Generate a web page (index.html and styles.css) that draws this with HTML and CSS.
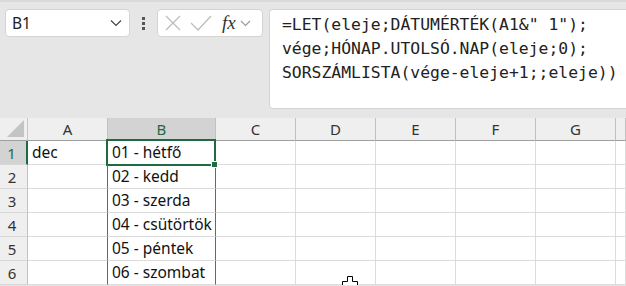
FILE: index.html
```html
<!DOCTYPE html>
<html>
<head>
  <title>Sorszámlista</title>
  <link rel="stylesheet" href="styles.css">
</head>
<body>
  <div class="topbar">
    <div class="namebox">
      <span>B1</span>
      <svg width="12" height="8" viewBox="0 0 12 8"><path d="M1 1.5 L6 6.5 L11 1.5" fill="none" stroke="#444" stroke-width="1.2"/></svg>
    </div>
    <div class="dots"><i></i><i></i><i></i></div>
    <div class="fxbox">
      <svg width="18" height="16" viewBox="0 0 18 16"><path d="M2 1 L16 15 M16 1 L2 15" stroke="#bdbdbd" stroke-width="1.3"/></svg>
      <svg width="22" height="16" viewBox="0 0 22 16"><path d="M1 8 L8 15 L21 1" fill="none" stroke="#bdbdbd" stroke-width="1.3"/></svg>
      <span class="fx">fx</span>
      <svg width="11" height="7" viewBox="0 0 11 7"><path d="M1 1 L5.5 5.5 L10 1" fill="none" stroke="#999" stroke-width="1.1"/></svg>
    </div>
    <div class="formula">=LET(eleje;DÁTUMÉRTÉK(A1&amp;" 1");
vége;HÓNAP.UTOLSÓ.NAP(eleje;0);
SORSZÁMLISTA(vége-eleje+1;;eleje))</div>
  </div>

  <div class="sheet">
    <div class="corner"><svg width="17" height="17" viewBox="0 0 17 17"><path d="M17 0 L17 17 L0 17 Z" fill="#c4c4c4"/></svg></div>
    <div class="colhead">A</div>
    <div class="colhead active">B</div>
    <div class="colhead">C</div>
    <div class="colhead">D</div>
    <div class="colhead">E</div>
    <div class="colhead">F</div>
    <div class="colhead">G</div>
    <div class="colhead"></div>

    <div class="rowhead active">1</div>
    <div class="cell">dec</div>
    <div class="cell selected">01 - hétfő</div>
    <div class="cell"></div><div class="cell"></div><div class="cell"></div><div class="cell"></div><div class="cell"></div><div class="cell"></div>

    <div class="rowhead">2</div>
    <div class="cell spill-edge"></div>
    <div class="cell spill">02 - kedd</div>
    <div class="cell"></div><div class="cell"></div><div class="cell"></div><div class="cell"></div><div class="cell"></div><div class="cell"></div>

    <div class="rowhead">3</div>
    <div class="cell spill-edge"></div>
    <div class="cell spill">03 - szerda</div>
    <div class="cell"></div><div class="cell"></div><div class="cell"></div><div class="cell"></div><div class="cell"></div><div class="cell"></div>

    <div class="rowhead">4</div>
    <div class="cell spill-edge"></div>
    <div class="cell spill">04 - csütörtök</div>
    <div class="cell"></div><div class="cell"></div><div class="cell"></div><div class="cell"></div><div class="cell"></div><div class="cell"></div>

    <div class="rowhead">5</div>
    <div class="cell spill-edge"></div>
    <div class="cell spill">05 - péntek</div>
    <div class="cell"></div><div class="cell"></div><div class="cell"></div><div class="cell"></div><div class="cell"></div><div class="cell"></div>

    <div class="rowhead">6</div>
    <div class="cell spill-edge"></div>
    <div class="cell spill">06 - szombat</div>
    <div class="cell"></div>
    <div class="cell">
      <svg class="cursor" width="18" height="12" viewBox="0 0 18 12"><path d="M6.5 0.5 H11.5 V5.5 H16.5 V12 H1.5 V5.5 H6.5 Z" fill="#fff" stroke="#000" stroke-width="1"/></svg>
    </div>
    <div class="cell"></div><div class="cell"></div><div class="cell"></div><div class="cell"></div>
  </div>
</body>
</html>
```

FILE: styles.css
```css
body {
  margin: 0;
  background-color: #e6e6e6;
  font-family: "Noto Sans", sans-serif;
  color: #222;
  overflow: hidden;
}

.topbar {
  display: flex;
  align-items: flex-start;
  height: 118px;
  box-sizing: border-box;
  padding: 9px 0 0 5px;
  border-top: 2px solid #dadada;
}

.namebox {
  width: 125px;
  height: 28px;
  box-sizing: border-box;
  margin-top: -2px;
  background-color: #fff;
  border: 1px solid #d4d4d4;
  border-radius: 4px;
  display: flex;
  align-items: center;
  justify-content: space-between;
  padding: 0 7px 0 6px;
  font-size: 15.5px;
}

.dots {
  width: 27px;
  height: 28px;
  margin-top: -2px;
  display: flex;
  flex-direction: column;
  align-items: center;
  justify-content: center;
  gap: 2px;
}

.dots i {
  width: 3px;
  height: 3px;
  background-color: #555;
}

.fxbox {
  width: 106px;
  height: 28px;
  box-sizing: border-box;
  margin-top: -2px;
  background-color: #fff;
  border: 1px solid #d4d4d4;
  border-radius: 4px;
  display: flex;
  align-items: center;
  padding-left: 6px;
  gap: 8px;
}

.fxbox .fx {
  font-family: "Liberation Serif", serif;
  font-style: italic;
  font-size: 19px;
  color: #333;
  margin-left: 2px;
  margin-right: -4px;
}

.formula {
  flex: 1;
  height: 100px;
  box-sizing: border-box;
  margin: -2px 0 0 6px;
  background-color: #fff;
  border: 1px solid #d4d4d4;
  border-right: none;
  border-radius: 4px 0 0 4px;
  padding: 3px 0 0 12px;
  font-family: "DejaVu Sans Mono", monospace;
  font-size: 16.4px;
  line-height: 24px;
  white-space: pre;
  color: #222;
}

.sheet {
  display: grid;
  grid-template-columns: 28px 80px 108px 80px 80px 80px 80px 80px 1fr;
  grid-template-rows: 23px repeat(6, 24px);
  background-color: #fff;
}

.corner,
.colhead,
.rowhead {
  background-color: #efefef;
  color: #333;
  font-size: 15px;
  display: flex;
  align-items: center;
  justify-content: center;
  box-sizing: border-box;
}

.corner {
  align-items: flex-end;
  justify-content: flex-end;
  padding: 0 3px 3px 0;
  border-right: 1px solid #c8c8c8;
  border-bottom: 1px solid #a0a0a0;
}

.colhead {
  border-right: 1px solid #c0c0c0;
  border-bottom: 1px solid #a0a0a0;
}

.colhead.active {
  background-color: #d3d3d3;
  color: #1e6b41;
  border-bottom: 2px solid #1e6b41;
}

.rowhead {
  border-right: 1px solid #c0c0c0;
  border-bottom: 1px solid #d6d6d6;
  padding-right: 3px;
}

.rowhead.active {
  background-color: #d3d3d3;
  color: #1e6b41;
  border-right: 2px solid #1e6b41;
}

.cell {
  position: relative;
  box-sizing: border-box;
  border-right: 1px solid #dcdcdc;
  border-bottom: 1px solid #dcdcdc;
  padding: 0 0 0 4px;
  font-size: 15.5px;
  line-height: 23px;
  white-space: nowrap;
  color: #111;
}

.selected::after {
  content: "";
  position: absolute;
  top: -2px;
  left: -2px;
  right: -1px;
  bottom: -2px;
  border: 2px solid #1e6b41;
}

.selected::before {
  content: "";
  position: absolute;
  right: -3px;
  bottom: -4px;
  width: 5px;
  height: 5px;
  background-color: #1e6b41;
  border: 1px solid #fff;
  z-index: 1;
}

.cell.spill,
.cell.spill-edge {
  border-right-color: #2d6ee0;
}

.cursor {
  position: absolute;
  left: 45px;
  top: 15px;
}
```
